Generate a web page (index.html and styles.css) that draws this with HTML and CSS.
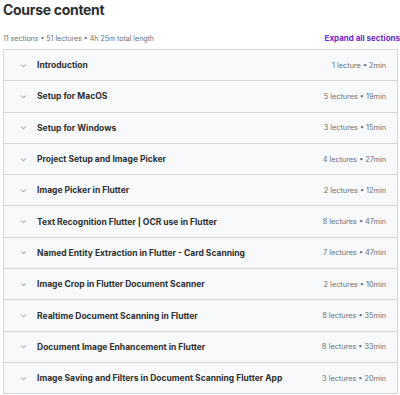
FILE: index.html
```html
<!DOCTYPE html>
<html lang="en">
<head>
    <meta charset="UTF-8">
    <meta name="viewport" content="width=device-width, initial-scale=1.0">
    <title>Course content</title>
    <link rel="stylesheet" href="styles.css">
</head>
<body>
    <div class="course">
        <h2 class="title">Course content</h2>
        <div class="meta">
            <span>11 sections &bull; 51 lectures &bull; 4h 25m total length</span>
            <button class="expand">Expand all sections</button>
        </div>
        <div class="sections">
            <div class="section"><span class="chev"><svg viewBox="0 0 10 10"><path d="M2.5 4l2.5 2.5 2.5-2.5"/></svg></span><span class="name">Introduction</span><span class="info">1 lecture &bull; 2min</span></div>
            <div class="section"><span class="chev"><svg viewBox="0 0 10 10"><path d="M2.5 4l2.5 2.5 2.5-2.5"/></svg></span><span class="name">Setup for MacOS</span><span class="info">5 lectures &bull; 19min</span></div>
            <div class="section"><span class="chev"><svg viewBox="0 0 10 10"><path d="M2.5 4l2.5 2.5 2.5-2.5"/></svg></span><span class="name">Setup for Windows</span><span class="info">3 lectures &bull; 15min</span></div>
            <div class="section"><span class="chev"><svg viewBox="0 0 10 10"><path d="M2.5 4l2.5 2.5 2.5-2.5"/></svg></span><span class="name">Project Setup and Image Picker</span><span class="info">4 lectures &bull; 27min</span></div>
            <div class="section"><span class="chev"><svg viewBox="0 0 10 10"><path d="M2.5 4l2.5 2.5 2.5-2.5"/></svg></span><span class="name">Image Picker in Flutter</span><span class="info">2 lectures &bull; 12min</span></div>
            <div class="section"><span class="chev"><svg viewBox="0 0 10 10"><path d="M2.5 4l2.5 2.5 2.5-2.5"/></svg></span><span class="name">Text Recognition Flutter | OCR use in Flutter</span><span class="info">8 lectures &bull; 47min</span></div>
            <div class="section"><span class="chev"><svg viewBox="0 0 10 10"><path d="M2.5 4l2.5 2.5 2.5-2.5"/></svg></span><span class="name">Named Entity Extraction in Flutter - Card Scanning</span><span class="info">7 lectures &bull; 47min</span></div>
            <div class="section"><span class="chev"><svg viewBox="0 0 10 10"><path d="M2.5 4l2.5 2.5 2.5-2.5"/></svg></span><span class="name">Image Crop in Flutter Document Scanner</span><span class="info">2 lectures &bull; 10min</span></div>
            <div class="section"><span class="chev"><svg viewBox="0 0 10 10"><path d="M2.5 4l2.5 2.5 2.5-2.5"/></svg></span><span class="name">Realtime Document Scanning in Flutter</span><span class="info">8 lectures &bull; 35min</span></div>
            <div class="section"><span class="chev"><svg viewBox="0 0 10 10"><path d="M2.5 4l2.5 2.5 2.5-2.5"/></svg></span><span class="name">Document Image Enhancement in Flutter</span><span class="info">8 lectures &bull; 33min</span></div>
            <div class="section"><span class="chev"><svg viewBox="0 0 10 10"><path d="M2.5 4l2.5 2.5 2.5-2.5"/></svg></span><span class="name">Image Saving and Filters in Document Scanning Flutter App</span><span class="info">3 lectures &bull; 20min</span></div>
        </div>
    </div>
</body>
</html>
```

FILE: styles.css
```css
body {
    margin: 0;
    font-family: Inter, "Noto Sans", sans-serif;
    background: #fff;
    color: #2d2f31;
}
.course {
    padding: 0 2px 0 3px;
}
.title {
    margin: 0;
    padding-top: 1px;
    font-size: 14px;
    font-weight: 700;
    line-height: 18px;
    letter-spacing: -0.3px;
}
.meta {
    display: flex;
    justify-content: space-between;
    align-items: center;
    margin-top: 12px;
    height: 14px;
    margin-bottom: 4px;
    font-size: 7px;
    color: #6a6f73;
}
.expand {
    border: none;
    background: none;
    padding: 0;
    margin-right: -2px;
    font-family: inherit;
    font-size: 8px;
    font-weight: 700;
    color: #6d28d2;
    cursor: pointer;
}
.sections {
    border: 1px solid #d1d7dc;
    border-bottom: none;
}
.section {
    display: flex;
    align-items: center;
    height: 30.3px;
    padding: 0 11px 0 15px;
    background: #f7f9fa;
    border-bottom: 1px solid #d1d7dc;
    font-size: 7.3px;
}
.chev {
    width: 9px;
    height: 9px;
    margin-right: 9px;
}
.chev svg {
    width: 9px;
    height: 9px;
    fill: none;
    stroke: #6a6f73;
    stroke-width: 0.9;
}
.name {
    flex: 1;
    font-size: 8.5px;
    font-weight: 700;
    color: #2d2f31;
}
.info {
    color: #6a6f73;
}
```
